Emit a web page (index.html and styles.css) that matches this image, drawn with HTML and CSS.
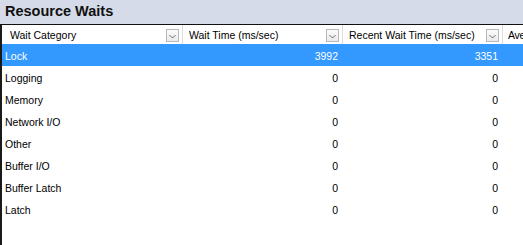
FILE: index.html
```html
<!DOCTYPE html>
<html lang="en">
<head>
    <meta charset="UTF-8">
    <meta name="viewport" content="width=device-width, initial-scale=1.0">
    <title>Resource Waits</title>
    <link rel="stylesheet" href="styles.css">
</head>
<body>
    <div class="panel">
        <div class="panel-title">Resource Waits</div>

        <div class="grid">
            <div class="row head">
                <div class="cell"><span class="label">Wait Category</span><span class="drop"></span></div>
                <div class="cell"><span class="label">Wait Time (ms/sec)</span><span class="drop"></span></div>
                <div class="cell"><span class="label">Recent Wait Time (ms/sec)</span><span class="drop"></span></div>
                <div class="cell"><span class="label">Ave</span></div>
            </div>

            <!-- wait rows get filled in below -->
            <div id="rows"></div>
        </div>
    </div>

    <script>
        const rows = document.getElementById('rows');
        const waits = [
            ['Lock', 3992, 3351],
            ['Logging', 0, 0],
            ['Memory', 0, 0],
            ['Network I/O', 0, 0],
            ['Other', 0, 0],
            ['Buffer I/O', 0, 0],
            ['Buffer Latch', 0, 0],
            ['Latch', 0, 0]
        ];

        waits.forEach((w, i) => {
            const row = document.createElement('div');
            row.className = 'row' + (i === 0 ? ' selected' : '');
            row.innerHTML =
                '<div class="cell">' + w[0] + '</div>' +
                '<div class="cell num">' + w[1] + '</div>' +
                '<div class="cell num">' + w[2] + '</div>' +
                '<div class="cell num"></div>';
            rows.appendChild(row);
        });
    </script>
</body>
</html>
```

FILE: styles.css
```css
body {
    margin: 0;
    padding: 0;
    width: 523px;
    height: 245px;
    overflow: hidden;
    background-color: #fff;
    font-family: "Liberation Sans", Arial, sans-serif;
}

.panel {
    height: 245px;
    display: flex;
    flex-direction: column;
}

.panel-title {
    height: 24px;
    flex: none;
    background-color: #d5dbe8;
    color: #111;
    font-size: 14.5px;
    font-weight: bold;
    line-height: 23px;
    padding-left: 5px;
}

.grid {
    flex: 1;
    border-top: 1px solid #111;
    border-left: 2px solid #1a1a1a;
    font-size: 10.5px;
    color: #000;
}

.row {
    display: grid;
    grid-template-columns: 181px 160px 160px 1fr;
    height: 22px;
    align-items: center;
}

.row .cell {
    padding: 2px 5px 0 3px;
    white-space: nowrap;
    overflow: hidden;
}

.row .num {
    text-align: right;
}

.row.selected {
    background-color: #3399ff;
    color: #fff;
}

.row.head {
    height: 19px;
    align-items: stretch;
}

.row.head .cell {
    display: flex;
    align-items: center;
    border-right: 1px solid #dcdcdc;
    padding: 1px 3px 0 6px;
}

.row.head .cell:first-child {
    padding-left: 8px;
}

/* last column only peeks in at the right edge */
.row.head .cell:last-child {
    border-right: none;
    padding-right: 0;
    padding-left: 5px;
    letter-spacing: -0.3px;
}

.row.head .label {
    flex: 1;
    overflow: hidden;
}

.drop {
    width: 11px;
    height: 11px;
    flex: none;
    border: 1px solid #b9b9b9;
    background: linear-gradient(#fbfbfb, #ebebeb);
    position: relative;
}

/* small chevron inside the filter button */
.drop::after {
    content: "";
    position: absolute;
    left: 3px;
    top: 3px;
    width: 4px;
    height: 4px;
    border-right: 1px solid #7a7a7a;
    border-bottom: 1px solid #7a7a7a;
    transform: scaleY(0.8) rotate(45deg);
}
```
